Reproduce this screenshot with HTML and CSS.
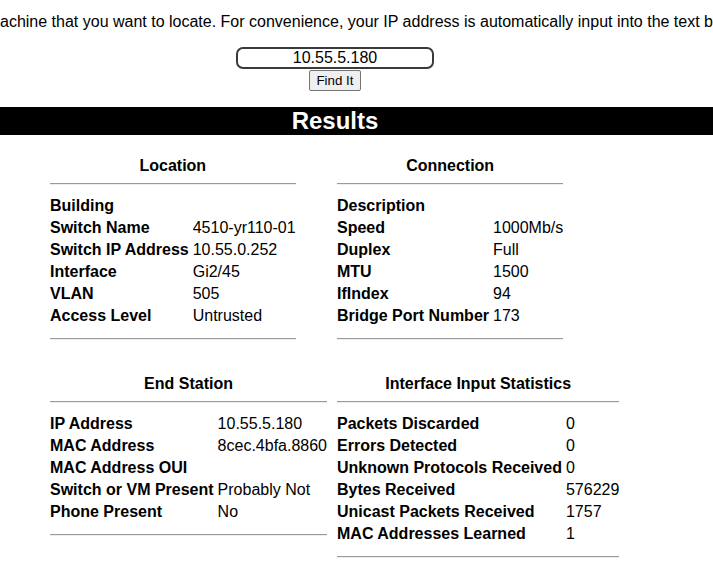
FILE: index.html
```html
<!DOCTYPE html>
<html>
<head>
<meta charset="utf-8">
<title>Find It</title>
<link rel="stylesheet" href="styles.css">
</head>
<body>
<p class="intro">achine that you want to locate. For convenience, your IP address is automatically input into the text box below.</p>
<form class="search">
  <input class="ip-input" type="text" value="10.55.5.180">
  <button class="find-btn" type="button">Find It</button>
</form>
<div class="results-bar"><h1 class="results-title">Results</h1></div>
<div class="results">
  <section class="info">
    <h2 class="info-title">Location</h2>
    <hr class="rule rule-top">
    <b class="k">Building</b><span class="v"></span>
    <b class="k">Switch Name</b><span class="v">4510-yr110-01</span>
    <b class="k">Switch IP Address</b><span class="v">10.55.0.252</span>
    <b class="k">Interface</b><span class="v">Gi2/45</span>
    <b class="k">VLAN</b><span class="v">505</span>
    <b class="k">Access Level</b><span class="v">Untrusted</span>
    <hr class="rule rule-bottom">
  </section>
  <section class="info">
    <h2 class="info-title">Connection</h2>
    <hr class="rule rule-top">
    <b class="k">Description</b><span class="v"></span>
    <b class="k">Speed</b><span class="v">1000Mb/s</span>
    <b class="k">Duplex</b><span class="v">Full</span>
    <b class="k">MTU</b><span class="v">1500</span>
    <b class="k">IfIndex</b><span class="v">94</span>
    <b class="k">Bridge Port Number</b><span class="v">173</span>
    <hr class="rule rule-bottom">
  </section>
  <section class="info">
    <h2 class="info-title">End Station</h2>
    <hr class="rule rule-top">
    <b class="k">IP Address</b><span class="v">10.55.5.180</span>
    <b class="k">MAC Address</b><span class="v">8cec.4bfa.8860</span>
    <b class="k">MAC Address OUI</b><span class="v"></span>
    <b class="k">Switch or VM Present</b><span class="v">Probably Not</span>
    <b class="k">Phone Present</b><span class="v">No</span>
    <hr class="rule rule-bottom">
  </section>
  <section class="info">
    <h2 class="info-title">Interface Input Statistics</h2>
    <hr class="rule rule-top">
    <b class="k">Packets Discarded</b><span class="v">0</span>
    <b class="k">Errors Detected</b><span class="v">0</span>
    <b class="k">Unknown Protocols Received</b><span class="v">0</span>
    <b class="k">Bytes Received</b><span class="v">576229</span>
    <b class="k">Unicast Packets Received</b><span class="v">1757</span>
    <b class="k">MAC Addresses Learned</b><span class="v">1</span>
    <hr class="rule rule-bottom">
  </section>
</div>
</body>
</html>
```
FILE: styles.css
```css
html, body {
  margin: 0;
  padding: 0;
  background: #ffffff;
  color: #000000;
  font-family: "Liberation Sans", Arial, sans-serif;
  font-size: 16px;
  overflow: hidden;
}

.intro {
  margin: 0;
  padding-top: 13px;
  line-height: 18px;
  white-space: nowrap;
  overflow: hidden;
}

.search {
  width: 670px;
  margin: 16px 0 0 0;
  display: flex;
  flex-direction: column;
  align-items: center;
}

.ip-input {
  box-sizing: border-box;
  width: 198px;
  height: 22px;
  margin: 0;
  padding: 0 4px;
  border: 2px solid #3a3a3a;
  border-radius: 7px;
  font-family: "Liberation Sans", Arial, sans-serif;
  font-size: 16px;
  color: #000;
  text-align: center;
  background: #fff;
  outline: none;
}

.find-btn {
  box-sizing: border-box;
  width: 52px;
  height: 21px;
  margin: 1px 0 0 0;
  padding: 0;
  border: 1px solid #767676;
  border-radius: 2px;
  background: #efefef;
  font-family: "Liberation Sans", Arial, sans-serif;
  font-size: 13.333px;
  color: #000;
}

.results-bar {
  margin-top: 16px;
  height: 28px;
  background: #000000;
}

.results-title {
  width: 670px;
  margin: 0;
  text-align: center;
  color: #ffffff;
  font-size: 24px;
  font-weight: bold;
  line-height: 28px;
}

.results {
  display: grid;
  grid-template-columns: 287px auto;
  row-gap: 35px;
  padding: 22px 0 0 50px;
  align-items: start;
}

.info {
  display: grid;
  grid-template-columns: auto auto;
  column-gap: 4px;
  justify-self: start;
}

.info-title {
  grid-column: 1 / -1;
  margin: 0;
  font-size: 16px;
  font-weight: bold;
  line-height: 18px;
  text-align: center;
}

.rule {
  grid-column: 1 / -1;
  height: 0;
  border: 0;
  border-top: 1px solid #9a9a9a;
  border-bottom: 1px solid #eeeeee;
}

.rule-top {
  margin: 8px 0 10px 0;
}

.rule-bottom {
  margin: 11px 0 0 0;
}

.k, .v {
  padding: 2px 0;
  line-height: 18px;
  white-space: nowrap;
}

.k {
  font-weight: bold;
}
```
